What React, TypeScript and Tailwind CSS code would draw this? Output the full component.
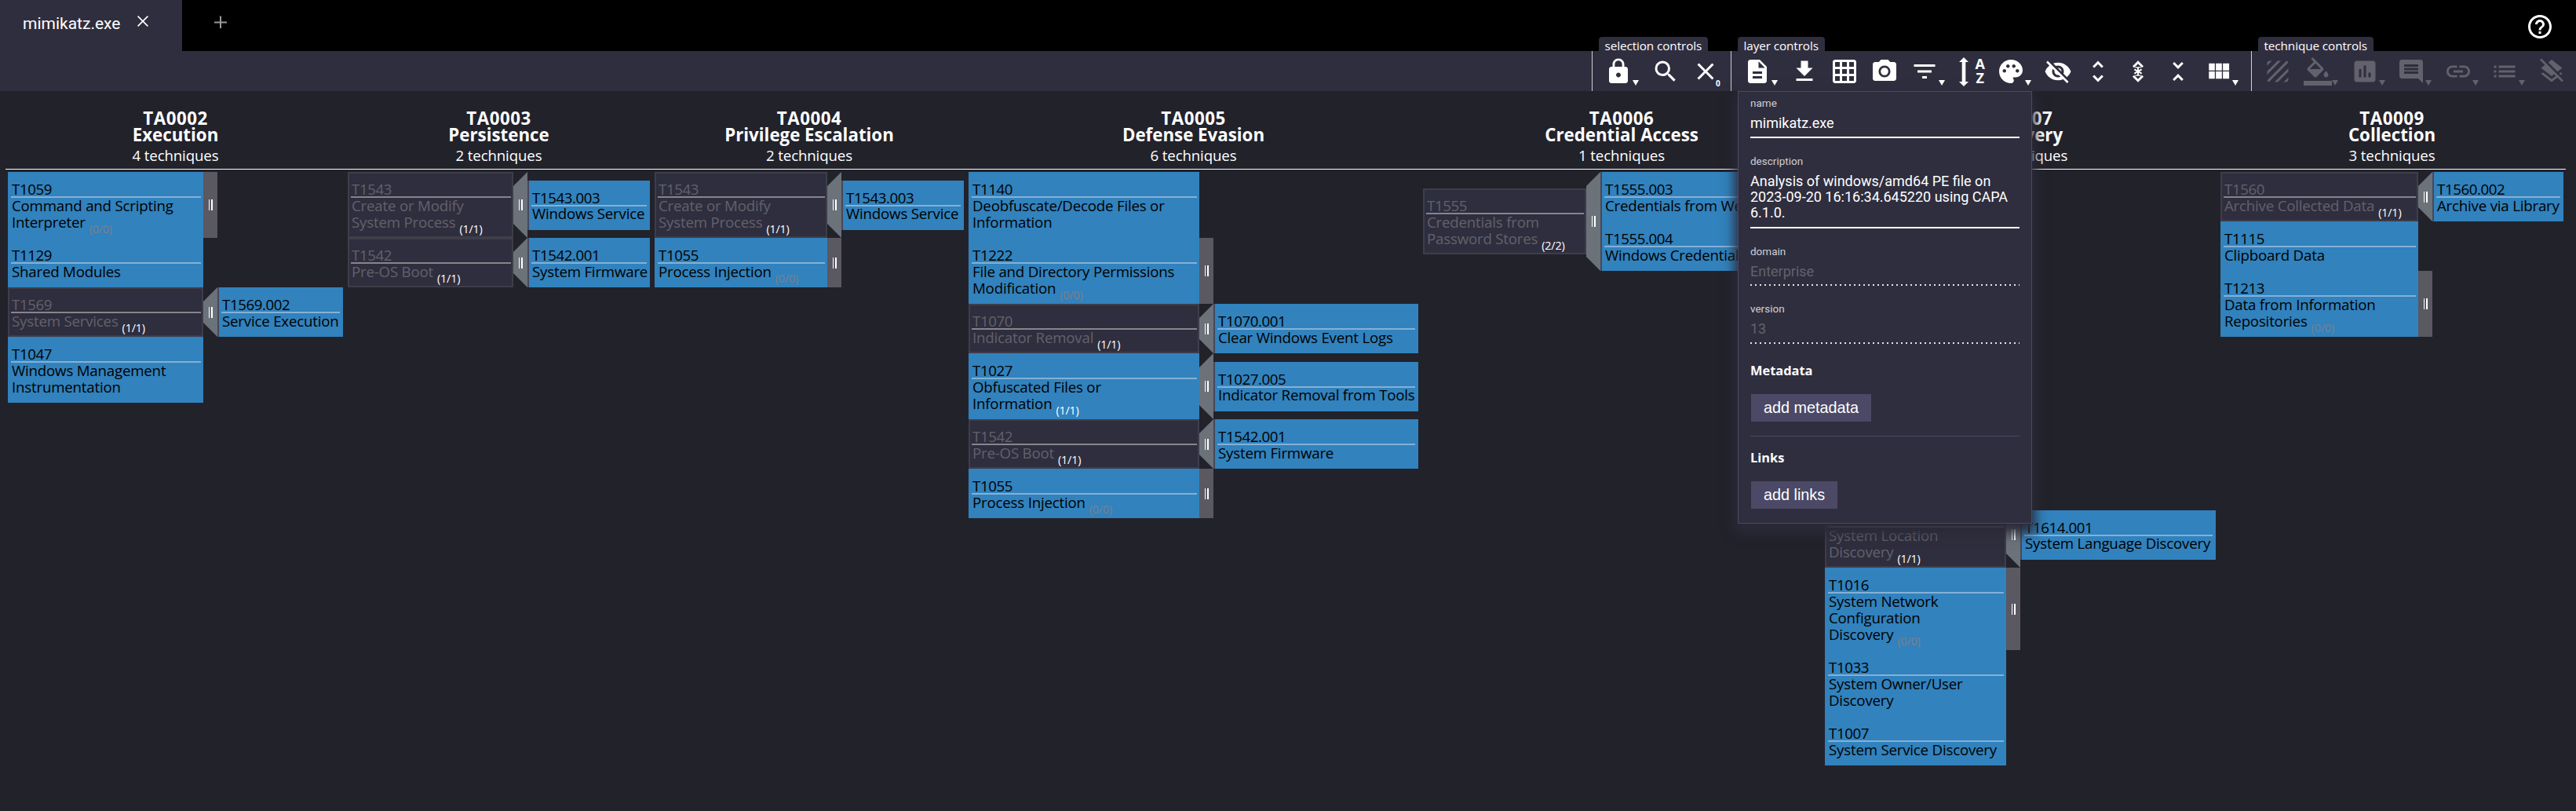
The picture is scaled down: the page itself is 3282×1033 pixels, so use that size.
import type { ReactNode } from "react";
import {
  MdLock,
  MdSearch,
  MdClose,
  MdDescription,
  MdGridOn,
  MdPhotoCamera,
  MdFilterList,
  MdPalette,
  MdVisibilityOff,
  MdUnfoldMore,
  MdUnfoldLess,
  MdTexture,
  MdAssessment,
  MdComment,
  MdLink,
  MdList,
  MdLayersClear,
  MdHelpOutline,
} from "react-icons/md";

type Sub = { id: string; name: string };
type Technique = {
  id: string;
  lines: string[];
  scored?: boolean;
  count?: string;
  subs?: Sub[];
};
type Tactic = {
  id: string;
  name: string;
  count: number;
  width: string;
  cell: string;
  spacer?: string;
  techniques: Technique[];
};

const tactics: Tactic[] = [
  {
    id: "TA0002",
    name: "Execution",
    count: 4,
    width: "w-[427px]",
    cell: "w-[249px]",
    techniques: [
      { id: "T1059", lines: ["Command and Scripting", "Interpreter"], scored: true, count: "0/0" },
      { id: "T1129", lines: ["Shared Modules"], scored: true },
      { id: "T1569", lines: ["System Services"], count: "1/1", subs: [{ id: "T1569.002", name: "Service Execution" }] },
      { id: "T1047", lines: ["Windows Management", "Instrumentation"], scored: true },
    ],
  },
  {
    id: "TA0003",
    name: "Persistence",
    count: 2,
    width: "w-[385px]",
    cell: "w-[211px]",
    techniques: [
      { id: "T1543", lines: ["Create or Modify", "System Process"], count: "1/1", subs: [{ id: "T1543.003", name: "Windows Service" }] },
      { id: "T1542", lines: ["Pre-OS Boot"], count: "1/1", subs: [{ id: "T1542.001", name: "System Firmware" }] },
    ],
  },
  {
    id: "TA0004",
    name: "Privilege Escalation",
    count: 2,
    width: "w-[394px]",
    cell: "w-[220px]",
    techniques: [
      { id: "T1543", lines: ["Create or Modify", "System Process"], count: "1/1", subs: [{ id: "T1543.003", name: "Windows Service" }] },
      { id: "T1055", lines: ["Process Injection"], scored: true, count: "0/0" },
    ],
  },
  {
    id: "TA0005",
    name: "Defense Evasion",
    count: 6,
    width: "w-[573px]",
    cell: "w-[294px]",
    techniques: [
      { id: "T1140", lines: ["Deobfuscate/Decode Files or", "Information"], scored: true },
      { id: "T1222", lines: ["File and Directory Permissions", "Modification"], scored: true, count: "0/0" },
      { id: "T1070", lines: ["Indicator Removal"], count: "1/1", subs: [{ id: "T1070.001", name: "Clear Windows Event Logs" }] },
      { id: "T1027", lines: ["Obfuscated Files or", "Information"], scored: true, count: "1/1", subs: [{ id: "T1027.005", name: "Indicator Removal from Tools" }] },
      { id: "T1542", lines: ["Pre-OS Boot"], count: "1/1", subs: [{ id: "T1542.001", name: "System Firmware" }] },
      { id: "T1055", lines: ["Process Injection"], scored: true, count: "0/0" },
    ],
  },
  {
    id: "TA0006",
    name: "Credential Access",
    count: 1,
    width: "w-[506px]",
    cell: "w-[208px]",
    techniques: [
      {
        id: "T1555",
        lines: ["Credentials from", "Password Stores"],
        count: "2/2",
        subs: [
          { id: "T1555.003", name: "Credentials from Web Browsers" },
          { id: "T1555.004", name: "Windows Credential Manager" },
        ],
      },
    ],
  },
  {
    id: "TA0007",
    name: "Discovery",
    count: 10,
    width: "w-[498px]",
    cell: "w-[231px]",
    spacer: "h-[420px]",
    techniques: [
      { id: "T1614", lines: ["System Location", "Discovery"], count: "1/1", subs: [{ id: "T1614.001", name: "System Language Discovery" }] },
      { id: "T1016", lines: ["System Network", "Configuration", "Discovery"], scored: true, count: "0/0" },
      { id: "T1033", lines: ["System Owner/User", "Discovery"], scored: true },
      { id: "T1007", lines: ["System Service Discovery"], scored: true },
    ],
  },
  {
    id: "TA0009",
    name: "Collection",
    count: 3,
    width: "w-[437px]",
    cell: "w-[252px]",
    techniques: [
      { id: "T1560", lines: ["Archive Collected Data"], count: "1/1", subs: [{ id: "T1560.002", name: "Archive via Library" }] },
      { id: "T1115", lines: ["Clipboard Data"], scored: true },
      { id: "T1213", lines: ["Data from Information", "Repositories"], scored: true, count: "0/0" },
    ],
  },
];

function CellText({ id, lines, count, scored }: { id: string; lines: string[]; count?: string; scored: boolean }) {
  return (
    <>
      <div className="h-[19px] pl-[1px] tracking-[-0.4px]">{id}</div>
      <div className={`h-[2px] ${scored ? "bg-[#83b1d7]" : "bg-[#86858d]"}`} />
      <div className="-mt-[0.5px] mb-[0.5px] pl-[1px]">
        {lines.map((line, i) => (
          <div key={line} className="h-[21px]">
            {line}
            {count && i === lines.length - 1 && (
              <span
                className={`relative top-[7px] ml-[5px] text-[14.4px] leading-none ${
                  count === "0/0" ? "text-[#7d8189]" : "text-white"
                }`}
              >
                ({count})
              </span>
            )}
          </div>
        ))}
      </div>
    </>
  );
}

function Grip() {
  return (
    <div className="flex h-[14px] w-[5px] justify-between">
      <div className="w-[1.5px] bg-white" />
      <div className="w-[1.5px] bg-white" />
    </div>
  );
}

function Row({ t, cell }: { t: Technique; cell: string }) {
  return (
    <div className="flex items-center">
      <div
        className={`shrink-0 pb-[9px] pl-[4px] pr-[3px] pt-[12px] ${cell} ${
          t.scored
            ? "bg-[#3182bd] text-black"
            : "bg-[#2f2e3e] text-[#62616c] shadow-[inset_0_0_0_2px_#3e3d4a]"
        }`}
      >
        <CellText id={t.id} lines={t.lines} count={t.count} scored={!!t.scored} />
      </div>
      {t.count && (
        <div
          className={`flex w-[18px] shrink-0 items-center justify-center self-stretch ${
            t.subs
              ? "bg-[#6b7279] [clip-path:polygon(0_18px,100%_0,100%_100%,0_calc(100%-18px))]"
              : "bg-[#5a5861]"
          }`}
        >
          <Grip />
        </div>
      )}
      {t.subs && (
        <div className="min-w-0 flex-1 border-l-2 border-[#47475a]">
          {t.subs.map((s) => (
            <div key={s.id} className="bg-[#3182bd] pb-[9px] pl-[3px] pr-[4px] pt-[12px] text-black">
              <CellText id={s.id} lines={[s.name]} scored />
            </div>
          ))}
        </div>
      )}
    </div>
  );
}

function Caret() {
  return (
    <svg viewBox="0 0 8 7" className="absolute left-[43.5px] top-[37px] h-[7px] w-[8px]" fill="currentColor">
      <path d="M0 0h8L4 7z" />
    </svg>
  );
}

function Tool({ children, caret }: { children: ReactNode; caret?: boolean }) {
  return (
    <div
      className={`relative flex h-[51px] shrink-0 items-center pl-[7.5px] text-[36px] ${
        caret ? "w-[59.6px]" : "w-[51px]"
      }`}
    >
      {children}
      {caret && <Caret />}
    </div>
  );
}

function Glyph({ d }: { d: string }) {
  return (
    <svg viewBox="0 0 24 24" className="size-[36px]" fill="currentColor">
      <path d={d} />
    </svg>
  );
}

function Section({ label, width, muted, children }: { label: string; width: string; muted?: boolean; children: ReactNode }) {
  return (
    <div className={`relative flex shrink-0 border-l border-[#cfcfd3] pl-[7.5px] ${width} ${muted ? "text-[#62616c]" : "text-white"}`}>
      <div className="absolute -top-[18px] left-[7.5px] h-[18px] whitespace-nowrap rounded-t-[4px] bg-[#2f2e3e] px-[8px] pt-[1px] text-[15.3px] leading-[20px] tracking-[-0.1px] text-white">
        {label}
      </div>
      {children}
    </div>
  );
}

function Field({ label, children }: { label: string; children: ReactNode }) {
  return (
    <>
      <div className="h-[16px] text-[13.5px] leading-[16px] text-[#d0cfd5]">{label}</div>
      {children}
    </>
  );
}

function LayerPanel() {
  return (
    <div className="absolute left-[2214px] top-[116px] z-10 h-[551px] w-[375px] border border-[#4a4967] bg-[#2f2e3e] px-[15px] pt-[6px] font-[Roboto,sans-serif] text-[18px] leading-[20px] text-white shadow-[0_8px_14px_4px_#2b2a38]">
      <Field label="name">
        <div className="mt-[8px] border-b-2 border-white pb-[7px]">mimikatz.exe</div>
      </Field>
      <div className="h-[21px]" />
      <Field label="description">
        <div className="mt-[8px] border-b-2 border-white pb-[8px] whitespace-nowrap">
          Analysis of windows/amd64 PE file on
          <br />
          2023-09-20 16:16:34.645220 using CAPA
          <br />
          6.1.0.
        </div>
      </Field>
      <div className="h-[21px]" />
      <Field label="domain">
        <div className="mt-[8px] pb-[6px] text-[#62616c]">Enterprise</div>
        <div className="h-[2px] bg-[repeating-linear-gradient(90deg,#e4e4e8_0_2px,transparent_2px_6px)]" />
      </Field>
      <div className="h-[21px]" />
      <Field label="version">
        <div className="mt-[8px] pb-[7px] text-[#62616c]">13</div>
        <div className="h-[2px] bg-[repeating-linear-gradient(90deg,#e4e4e8_0_2px,transparent_2px_6px)]" />
      </Field>
      <div className="mt-[24px] font-['Open_Sans',sans-serif] text-[16.4px] font-bold">Metadata</div>
      <button className="ml-[1px] mt-[20px] block h-[35px] bg-[#4b4966] px-[16px] pb-[2px] font-['Liberation_Sans',sans-serif] text-[19.8px]">
        add metadata
      </button>
      <div className="mt-[18px] h-px bg-[#4a4967]" />
      <div className="mt-[17px] font-['Open_Sans',sans-serif] text-[16.4px] font-bold">Links</div>
      <button className="ml-[1px] mt-[20px] block h-[35px] bg-[#4b4966] px-[16px] pb-[2px] font-['Liberation_Sans',sans-serif] text-[19.8px]">
        add links
      </button>
    </div>
  );
}

export default function App() {
  return (
    <div className="relative h-[1033px] w-[3282px] overflow-hidden bg-[#22222b] font-['Open_Sans',sans-serif] text-white">
      <header className="flex h-[65px] items-start bg-black">
        <div className="flex h-[65px] w-[232px] items-start bg-[#2f2e3e] pl-[29px] pt-[18px] font-[Roboto,sans-serif] text-[21px] leading-[24px]">
          mimikatz.exe
          <svg viewBox="0 0 14 14" className="ml-[22px] mt-[2px] size-[14px]" stroke="white" strokeWidth="1.6">
            <path d="M.6.6l12.8 12.8M13.4.6L.6 13.4" />
          </svg>
        </div>
        <svg viewBox="0 0 16 16" className="ml-[41px] mt-[20px] size-[16px]" stroke="#999" strokeWidth="2">
          <path d="M0 8.5h16M8 .5v16" />
        </svg>
        <MdHelpOutline className="ml-auto mr-[28px] mt-[16px] size-[36px]" />
      </header>

      <div className="relative flex h-[51px] justify-end bg-[#2f2e3e]">
        <Section label="selection controls" width="w-[177px]">
          <Tool caret>
            <MdLock />
          </Tool>
          <Tool>
            <MdSearch />
          </Tool>
          <Tool>
            <MdClose />
            <span className="absolute left-[39px] top-[34px] text-[10px] font-bold leading-[14px]">0</span>
          </Tool>
        </Section>
        <Section label="layer controls" width="w-[663px]">
          <Tool caret>
            <MdDescription />
          </Tool>
          <Tool>
            <Glyph d="M19 9h-4V3H9v6H5l7 7 7-7zM5 18v2h14v-2H5z" />
          </Tool>
          <Tool>
            <MdGridOn />
          </Tool>
          <Tool>
            <MdPhotoCamera />
          </Tool>
          <Tool caret>
            <MdFilterList />
          </Tool>
          <div className="flex h-[51px] w-[51px] shrink-0 items-start pl-[10px] pt-[7px]">
            <svg viewBox="0 0 12 37" className="mt-[1px] h-[37px] w-[12px]" fill="currentColor">
              <path d="M6 0l6 6H8.3v25H12l-6 6-6-6h3.7V6H0z" />
            </svg>
            <div className="ml-[7px] w-[16px] text-center text-[18px] font-bold leading-[18px]">
              <div>A</div>
              <div>Z</div>
            </div>
          </div>
          <Tool caret>
            <MdPalette />
          </Tool>
          <Tool>
            <MdVisibilityOff />
          </Tool>
          <Tool>
            <MdUnfoldMore />
          </Tool>
          <Tool>
            <svg viewBox="0 0 24 24" className="size-[36px]" fill="none" stroke="currentColor">
              <path d="M8 8.2l4-4 4 4M8 15.8l4 4 4-4" strokeWidth="1.9" />
              <path d="M9.6 8.6h4.8M9.6 15.4h4.8" strokeWidth=".8" />
              <path d="M12 8.6v6.8M8.9 10.2l6.2 3.6M15.1 10.2l-6.2 3.6" strokeWidth="1.3" />
            </svg>
          </Tool>
          <Tool>
            <MdUnfoldLess />
          </Tool>
          <Tool caret>
            <Glyph d="M4.2 11.1h5V5.2h-5v5.900zm0 7h5v-6.100h-5v6.100zm5.900 0h5.100v-6.100h-5.100v6.100zm6 0h5.300v-6.100h-5.300v6.100zm-6-7h5.100V5.200h-5.100v5.900zm6-5.900v5.900h5.300V5.200h-5.300z" />
          </Tool>
        </Section>
        <Section label="technique controls" width="w-[414px]" muted>
          <Tool>
            <MdTexture />
          </Tool>
          <Tool caret>
            <Glyph d="M16.56 8.94L7.62 0 6.21 1.41l2.38 2.38-5.15 5.15c-.59.59-.59 1.54 0 2.12l5.5 5.5c.29.29.68.44 1.06.44s.77-.15 1.06-.44l5.5-5.5c.59-.58.59-1.53 0-2.12zM5.21 10L10 5.21 14.79 10H5.21zM19 11.5s-2 2.17-2 3.5c0 1.1.9 2 2 2s2-.9 2-2c0-1.33-2-3.5-2-3.5zM0 20h24v4H0z" />
          </Tool>
          <Tool caret>
            <MdAssessment />
          </Tool>
          <Tool caret>
            <MdComment />
          </Tool>
          <Tool caret>
            <MdLink />
          </Tool>
          <Tool caret>
            <MdList />
          </Tool>
          <Tool>
            <MdLayersClear />
          </Tool>
        </Section>
      </div>

      <main className="px-[7px]">
        <div className="flex h-[100px] w-[3262px] gap-[6px] border-b border-white px-[3px] pt-[24px] text-center leading-[21px]">
          {tactics.map((t) => (
            <div key={t.id} className={`shrink-0 ${t.width}`}>
              <div className="text-[22.3px] font-bold tracking-[0.5px]">{t.id}</div>
              <div className="text-[22.3px] font-bold">{t.name}</div>
              <div className="mt-[5px] text-[18.7px] tracking-[-0.15px]">{t.count} techniques</div>
            </div>
          ))}
        </div>
        <div className="flex items-start gap-[6px] px-[3px] pt-[3px] text-[18.7px] leading-[20px] tracking-[-0.2px] whitespace-nowrap">
          {tactics.map((t) => (
            <div key={t.id} className={`shrink-0 ${t.width}`}>
              {t.spacer && <div className={t.spacer} />}
              {t.techniques.map((x) => (
                <Row key={x.id} t={x} cell={t.cell} />
              ))}
            </div>
          ))}
        </div>
      </main>

      <LayerPanel />
    </div>
  );
}
